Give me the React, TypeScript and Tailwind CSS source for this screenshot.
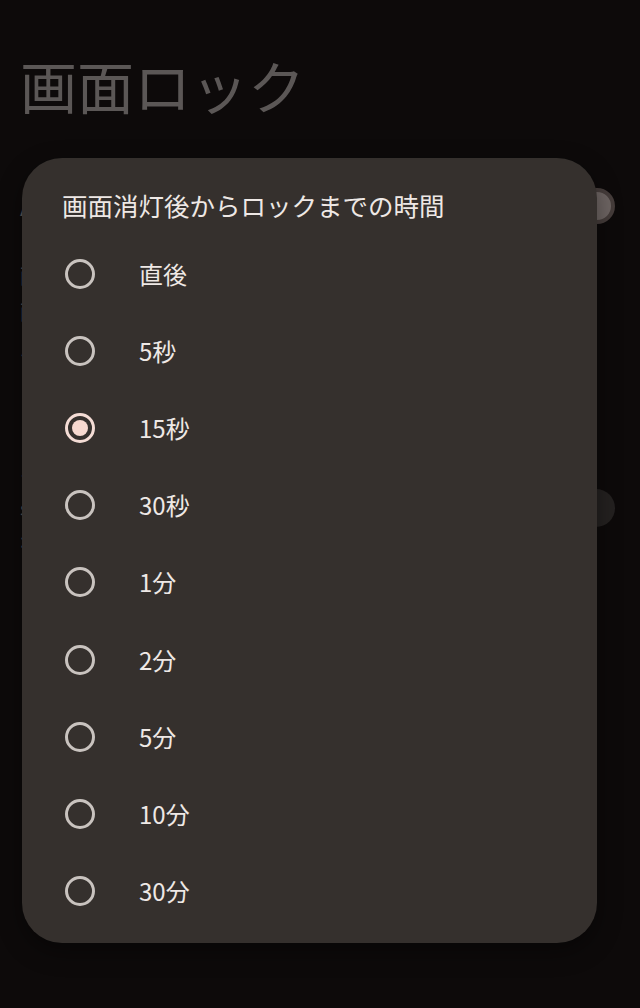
const options = ["直後", "5秒", "15秒", "30秒", "1分", "2分", "5分", "10分", "30分"];
const selected = "15秒";

function Radio({ checked }: { checked: boolean }) {
  return (
    <svg width="32" height="32" viewBox="0 0 32 32" className="shrink-0">
      <circle
        cx="16"
        cy="16"
        r="13.5"
        fill="none"
        stroke={checked ? "#f4dcd5" : "#c9c3bf"}
        strokeWidth="3"
      />
      {checked && <circle cx="16" cy="16" r="8" fill="#f7d9d0" />}
    </svg>
  );
}

export default function App() {
  return (
    <div
      className="relative h-[1008px] w-[640px] overflow-hidden bg-[#0d0a0a]"
      style={{ fontFamily: '"Noto Sans CJK JP", "Noto Sans", sans-serif' }}
    >
      {/* background settings page (dimmed) */}
      <div className="px-5 pt-[48px]">
        <h1 className="text-[57px] leading-[72px] text-[#5b5756]">画面ロック</h1>
        <div className="mt-[68px] flex items-center justify-between">
          <p className="text-[22px] text-[#5b5756]">A</p>
          <div className="mr-[5px] h-[36px] w-[36px] rounded-full border-[4px] border-[#463d3b] bg-[#6e6563]" />
        </div>
        <div className="mt-[36px] flex flex-col gap-1 text-[20px] leading-[32px] text-[#5b5756]">
          <p>画面</p>
          <p>画</p>
          <p>ん</p>
        </div>
        <div className="mt-[96px] flex items-center justify-between">
          <div className="flex flex-col text-[20px] leading-[32px] text-[#5b5756]">
            <p>ー</p>
            <p>s</p>
            <p>:</p>
          </div>
          <div className="mr-[5px] h-[38px] w-[38px] rounded-full bg-[#242120]" />
        </div>
      </div>

      {/* dialog */}
      <div className="absolute left-[22px] top-[158px] h-[785px] w-[575px] rounded-[40px] bg-[#35302d] shadow-[0_8px_24px_rgba(0,0,0,0.4)]">
        <h2 className="pl-[40px] pt-[31px] text-[25.5px] leading-[32px] text-[#eee8e5]">
          画面消灯後からロックまでの時間
        </h2>
        <div className="mt-[14px] flex flex-col">
          {options.map((opt) => (
            <div key={opt} className="flex h-[77.2px] items-center">
              <div className="ml-[42px]">
                <Radio checked={opt === selected} />
              </div>
              <span className="ml-[43px] text-[24px] leading-[32px] text-[#eee8e5]">{opt}</span>
            </div>
          ))}
        </div>
      </div>
    </div>
  );
}
